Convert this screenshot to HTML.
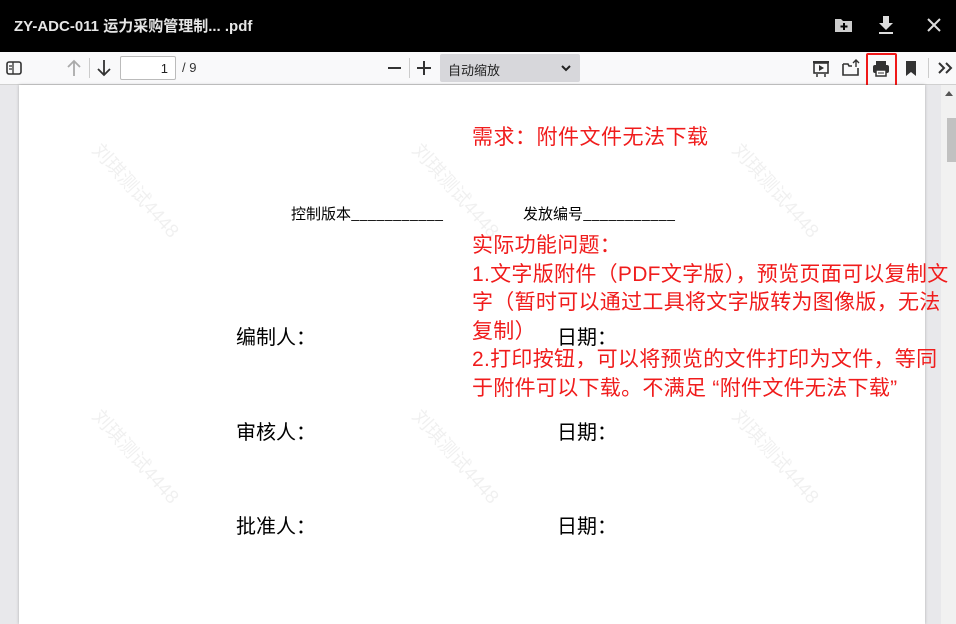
<!DOCTYPE html>
<html><head><meta charset="utf-8"><style>
*{margin:0;padding:0;box-sizing:border-box}
body{width:956px;height:624px;overflow:hidden;background:#e8e8eb;font-family:"Liberation Sans","Noto Sans CJK SC",sans-serif;position:relative}
.top{position:absolute;left:0;top:0;width:956px;height:52px;background:#000}
.title{position:absolute;left:14px;top:15px;color:#e6e6e6;font-size:15px;font-weight:bold;white-space:nowrap}
.tb{position:absolute;left:0;top:52px;width:956px;height:33px;background:#f9f9fa;border-bottom:1px solid #d0d0d0}
.a{position:absolute}
.page{position:absolute;left:19px;top:85px;width:906px;height:539px;background:#fff;box-shadow:0 0 3px rgba(0,0,0,.25)}
.sb{position:absolute;left:941px;top:85px;width:15px;height:539px;background:#f1f1f1}
.wm{position:absolute;color:rgba(0,0,0,.06);font-size:19px;transform:rotate(48deg);transform-origin:left top;white-space:nowrap}
.blk{position:absolute;color:#000;white-space:nowrap;font-family:"Noto Sans CJK SC",sans-serif}
.red{position:absolute;color:#f01c1c;font-size:21px;white-space:nowrap;font-family:"Liberation Sans","Noto Sans CJK SC",sans-serif}
</style></head><body>
<div class="top"><div class="title">ZY-ADC-011 运力采购管理制... .pdf</div>
<svg class="a" style="left:834px;top:16px" width="20" height="18"><path d="M1 3h6l2 2h9v11H1z" fill="#ccc"/><path d="M10 7v7M6.5 10.5h7" stroke="#000" stroke-width="2"/></svg>
<svg class="a" style="left:877px;top:15px" width="18" height="20"><path d="M6 1h6v7h4l-7 7-7-7h4z" fill="#ddd"/><rect x="2" y="17" width="14" height="2" fill="#ddd"/></svg>
<svg class="a" style="left:926px;top:17px" width="16" height="16"><path d="M2 2l12 12M14 2L2 14" stroke="#ddd" stroke-width="2"/></svg>
</div>
<div class="tb">
<svg class="a" style="left:6px;top:9px" width="16" height="14"><rect x="1" y="1" width="14" height="12" rx="2" fill="none" stroke="#333" stroke-width="1.6"/><path d="M7 1v12M3 5h3M3 8h3" stroke="#333" stroke-width="1.3"/></svg>
<svg class="a" style="left:66px;top:7px" width="16" height="18"><path d="M8 2v15M2 8l6-6 6 6" fill="none" stroke="#aaa" stroke-width="1.8"/></svg>
<div class="a" style="left:89px;top:6px;width:1px;height:20px;background:#ccc"></div>
<svg class="a" style="left:96px;top:7px" width="16" height="18"><path d="M8 1v15M2 10l6 6 6-6" fill="none" stroke="#333" stroke-width="1.8"/></svg>
<div class="a" style="left:120px;top:4px;width:56px;height:24px;background:#fff;border:1px solid #bbb;border-radius:2px;font-size:13px;text-align:right;padding:4px 7px 0 0;color:#222">1</div>
<div class="a" style="left:182px;top:8px;font-size:13px;color:#333">/ 9</div>
<div class="a" style="left:388px;top:15px;width:13px;height:2px;background:#333"></div>
<div class="a" style="left:409px;top:6px;width:1px;height:20px;background:#ccc"></div>
<svg class="a" style="left:416px;top:8px" width="16" height="16"><path d="M8 1v14M1 8h14" stroke="#333" stroke-width="2"/></svg>
<div class="a" style="left:440px;top:2px;width:140px;height:28px;background:#d7d7db;border-radius:2px;font-size:13px;color:#222;padding:6px 0 0 8px">自动缩放</div>
<svg class="a" style="left:561px;top:12px" width="10" height="8"><path d="M1 2l4 4 4-4" fill="none" stroke="#222" stroke-width="2"/></svg>
<svg class="a" style="left:812px;top:8px" width="18" height="18"><rect x="1" y="1" width="16" height="2" fill="#333"/><rect x="2" y="3" width="14" height="10" fill="none" stroke="#333" stroke-width="1.6"/><path d="M7 5v6l5-3z" fill="#333"/><path d="M5 14v3M13 14v3" stroke="#333" stroke-width="1.5"/></svg>
<svg class="a" style="left:842px;top:7px" width="18" height="18"><path d="M1 5h5l1 2h3M1 5v11h15V9" fill="none" stroke="#333" stroke-width="1.6"/><path d="M14 1v7M11 4l3-3 3 3" fill="none" stroke="#333" stroke-width="1.4"/></svg>
<div class="a" style="left:866px;top:1px;width:31px;height:35px;border:2px solid #f01818;border-radius:2px"></div>
<svg class="a" style="left:872px;top:8px" width="18" height="17"><rect x="4" y="1" width="10" height="4" fill="#333"/><rect x="1" y="5" width="16" height="8" rx="2" fill="#333"/><rect x="4" y="10" width="10" height="6" fill="#fff" stroke="#333" stroke-width="1.5"/><path d="M6 13h6" stroke="#333"/></svg>
<svg class="a" style="left:905px;top:8px" width="12" height="17"><path d="M1 1h10v15l-5-4-5 4z" fill="#333"/></svg>
<div class="a" style="left:928px;top:6px;width:1px;height:20px;background:#ccc"></div>
<svg class="a" style="left:937px;top:9px" width="16" height="14"><path d="M2 2l5 5-5 5M9 2l5 5-5 5" fill="none" stroke="#333" stroke-width="2"/></svg>
</div>
<div class="page">
<div class="wm" style="left:88px;top:52px">刘琪测试4448</div>
<div class="wm" style="left:408px;top:52px">刘琪测试4448</div>
<div class="wm" style="left:728px;top:52px">刘琪测试4448</div>
<div class="wm" style="left:88px;top:318px">刘琪测试4448</div>
<div class="wm" style="left:408px;top:318px">刘琪测试4448</div>
<div class="wm" style="left:728px;top:318px">刘琪测试4448</div>
<div class="blk" style="left:272px;top:118px;font-size:15px">控制版本___________</div>
<div class="blk" style="left:504px;top:118px;font-size:15px">发放编号___________</div>
<div class="blk" style="left:217px;top:236px;font-size:20px">编制人：</div>
<div class="blk" style="left:538px;top:236px;font-size:20px">日期：</div>
<div class="blk" style="left:217px;top:331px;font-size:20px">审核人：</div>
<div class="blk" style="left:538px;top:331px;font-size:20px">日期：</div>
<div class="blk" style="left:217px;top:425px;font-size:20px">批准人：</div>
<div class="blk" style="left:538px;top:425px;font-size:20px">日期：</div>
</div>
<div class="sb"><div class="a" style="left:4px;top:6px;width:0;height:0;border:4px solid transparent;border-bottom:5px solid #555;border-top:0"></div><div class="a" style="left:6px;top:33px;width:9px;height:44px;background:#c1c1c1"></div></div>
<div class="red" style="left:472px;top:121px;letter-spacing:0.5px">需求：附件文件无法下载</div>
<div class="red" style="left:472px;top:232px;line-height:28.5px;letter-spacing:0.3px">实际功能问题：<br>1.文字版附件（PDF文字版），预览页面可以复制文<br>字（暂时可以通过工具将文字版转为图像版，无法<br>复制）<br>2.打印按钮，可以将预览的文件打印为文件，等同<br>于附件可以下载。不满足 “附件文件无法下载”</div>
</body></html>
